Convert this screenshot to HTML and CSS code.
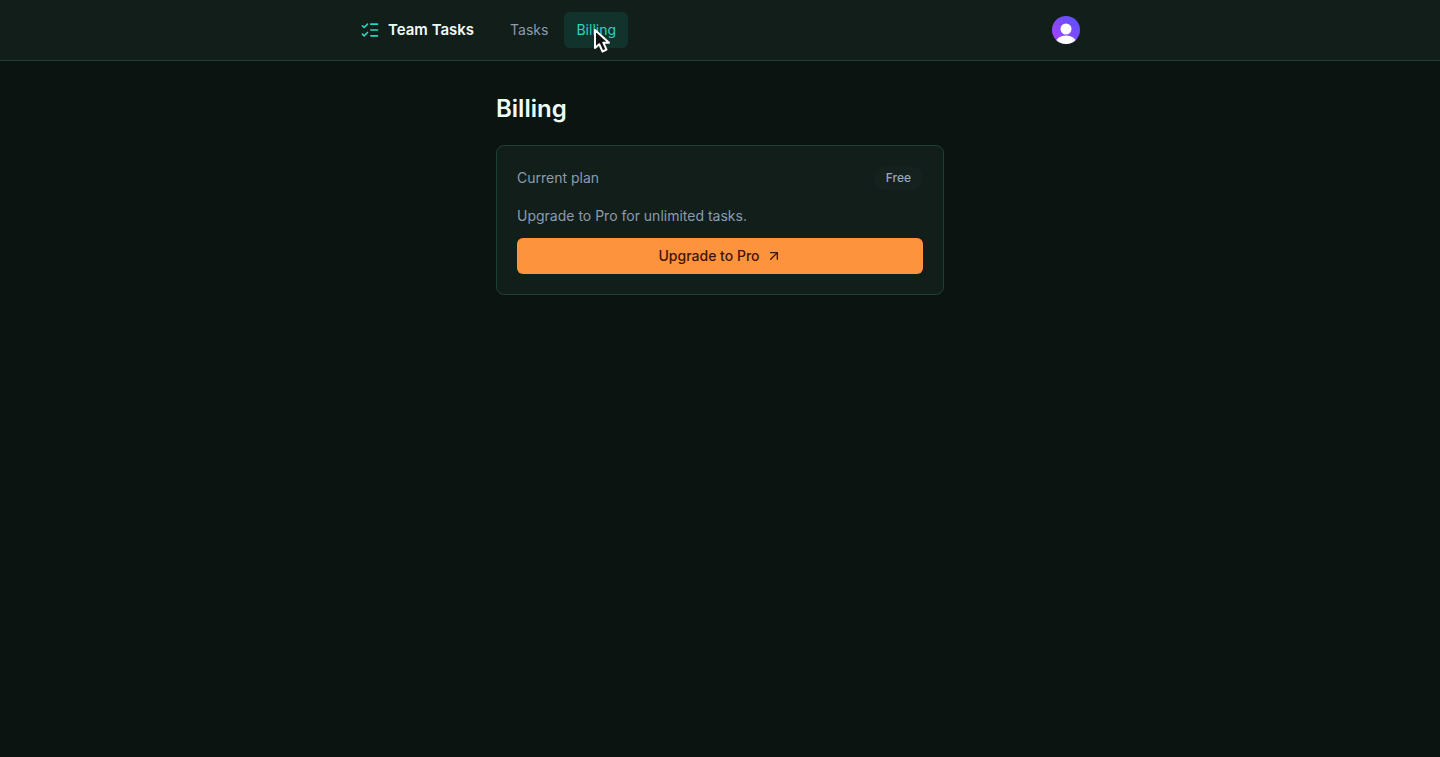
FILE: index.html
```html
<!DOCTYPE html>
<html lang="en">
<head>
    <meta charset="UTF-8">
    <meta name="viewport" content="width=device-width, initial-scale=1.0">
    <title>Team Tasks</title>
    <link rel="stylesheet" href="styles.css">
</head>
<body>
    <header class="site-header">
        <div class="header-inner">
            <a class="brand" href="#">
                <svg class="brand-icon" viewBox="0 0 24 24" aria-hidden="true">
                    <path d="m3 17 2 2 4-4"/>
                    <path d="m3 7 2 2 4-4"/>
                    <path d="M13 5h8"/>
                    <path d="M13 12h8"/>
                    <path d="M13 19h8"/>
                </svg>
                Team Tasks
            </a>
            <nav class="site-nav">
                <a class="nav-link" href="#">Tasks</a>
                <a class="nav-link active" href="#">Billing
                    <svg class="cursor" viewBox="0 0 18 26" aria-hidden="true">
                        <path d="M2 2v18l4.200-3.800 3.300 7.300 4-1.800-3.200-7h5.700z"/>
                    </svg>
                </a>
            </nav>
            <button class="avatar" type="button" aria-label="Account">
                <svg viewBox="0 0 28 28" aria-hidden="true">
                    <defs>
                        <linearGradient id="avatar-fill" x1="0" y1="1" x2="1" y2="0">
                            <stop offset="0.150" stop-color="#a044ff"/>
                            <stop offset="0.850" stop-color="#6250ff"/>
                        </linearGradient>
                        <clipPath id="avatar-clip"><circle cx="14" cy="14" r="14"/></clipPath>
                    </defs>
                    <g clip-path="url(#avatar-clip)">
                        <rect width="28" height="28" fill="url(#avatar-fill)"/>
                        <circle cx="14" cy="13" r="5.500" fill="#fff"/>
                        <ellipse cx="14" cy="26" rx="10" ry="6.500" fill="#fff"/>
                    </g>
                </svg>
            </button>
        </div>
    </header>

    <main class="billing">
        <h1>Billing</h1>
        <section class="card">
            <div class="plan-row">
                <span>Current plan</span>
                <span class="badge">Free</span>
            </div>
            <p class="upgrade-text">Upgrade to Pro for unlimited tasks.</p>
            <button class="upgrade-button" type="button">
                Upgrade to Pro
                <svg class="arrow-icon" viewBox="0 0 24 24" aria-hidden="true">
                    <path d="M7 7h10v10"/>
                    <path d="M7 17 17 7"/>
                </svg>
            </button>
        </section>
    </main>
</body>
</html>
```
FILE: styles.css
```css
* {
    box-sizing: border-box;
}

body {
    margin: 0;
    min-height: 100vh;
    background-color: #0b1411;
    color: #8b9cae;
    font-family: Inter, "Open Sans", sans-serif;
    font-size: 14px;
    line-height: 20px;
}

.site-header {
    background-color: #121e1a;
    border-bottom: 1px solid #1c3f36;
}

.header-inner {
    display: flex;
    align-items: center;
    max-width: 720px;
    margin: 0 auto;
    padding: 12px 0;
}

.brand {
    display: flex;
    align-items: center;
    gap: 8px;
    color: #effdf8;
    font-size: 15px;
    font-weight: 600;
    text-decoration: none;
}

.brand-icon {
    width: 20px;
    height: 20px;
    fill: none;
    stroke: #2dd4bf;
    stroke-width: 2;
    stroke-linecap: round;
    stroke-linejoin: round;
}

.site-nav {
    display: flex;
    gap: 4px;
    margin-left: 24px;
}

.nav-link {
    position: relative;
    padding: 8px 12px;
    border-radius: 6px;
    color: #8b9cae;
    text-decoration: none;
}

.nav-link.active {
    background-color: #12332b;
    color: #2dd4bf;
}

/* Pointer over the active link */
.cursor {
    position: absolute;
    top: 16px;
    left: 29px;
    width: 18px;
    height: 26px;
    fill: #111;
    stroke: #fff;
    stroke-width: 2;
    stroke-linejoin: round;
}

.avatar {
    width: 28px;
    height: 28px;
    margin-left: auto;
    padding: 0;
    border: none;
    border-radius: 50%;
    background: none;
    cursor: pointer;
}

.avatar svg {
    display: block;
}

.billing {
    max-width: 448px;
    margin: 0 auto;
    padding: 32px 0;
}

h1 {
    margin: 0 0 20px;
    color: #effdf8;
    font-size: 24px;
    font-weight: 600;
    line-height: 32px;
}

.card {
    padding: 20px;
    border: 1px solid #1c3f36;
    border-radius: 8px;
    background-color: #121e1a;
}

.plan-row {
    display: flex;
    align-items: center;
    justify-content: space-between;
}

.badge {
    padding: 2px 12px;
    border-radius: 12px;
    background-color: #15211f;
    color: #98a8b8;
    font-size: 12px;
    font-weight: 500;
}

.upgrade-text {
    margin: 16px 0 12px;
}

.upgrade-button {
    display: flex;
    align-items: center;
    justify-content: center;
    gap: 6px;
    width: 100%;
    padding: 8px 16px;
    border: none;
    border-radius: 6px;
    background-color: #fd933c;
    color: #431407;
    font-family: inherit;
    font-size: 14px;
    font-weight: 500;
    line-height: 20px;
    cursor: pointer;
}

.arrow-icon {
    width: 16px;
    height: 16px;
    fill: none;
    stroke: #431407;
    stroke-width: 2;
    stroke-linecap: round;
    stroke-linejoin: round;
}
```
